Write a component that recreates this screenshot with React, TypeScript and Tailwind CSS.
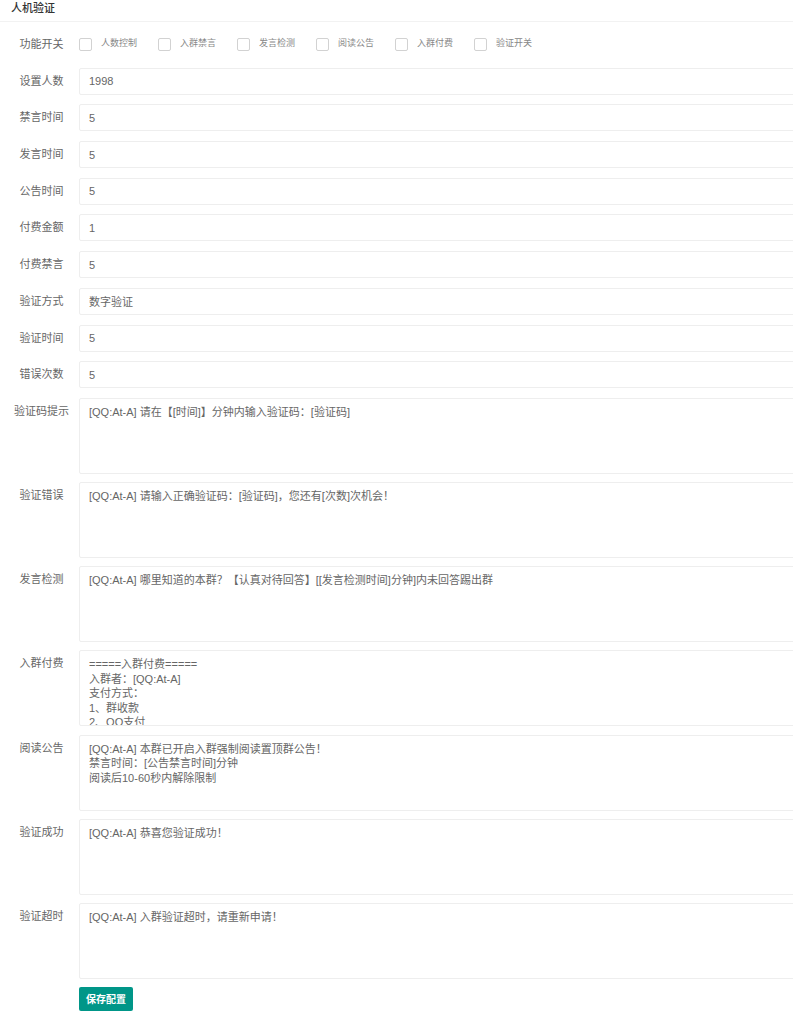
import { useState } from 'react'

const switches = ['人数控制', '入群禁言', '发言检测', '阅读公告', '入群付费', '验证开关']

const fields: [string, string][] = [
  ['设置人数', '1998'],
  ['禁言时间', '5'],
  ['发言时间', '5'],
  ['公告时间', '5'],
  ['付费金额', '1'],
  ['付费禁言', '5'],
  ['验证方式', '数字验证'],
  ['验证时间', '5'],
  ['错误次数', '5'],
]

const messages: [string, string][] = [
  ['验证码提示', '[QQ:At-A] 请在【[时间]】分钟内输入验证码：[验证码]'],
  ['验证错误', '[QQ:At-A] 请输入正确验证码：[验证码]，您还有[次数]次机会！'],
  ['发言检测', '[QQ:At-A] 哪里知道的本群？【认真对待回答】[[发言检测时间]分钟]内未回答踢出群'],
  ['入群付费', '=====入群付费=====\n入群者：[QQ:At-A]\n支付方式：\n1、群收款\n2、QQ支付\n3、微信支付\n请在[付费禁言]分钟内完成付费'],
  ['阅读公告', '[QQ:At-A] 本群已开启入群强制阅读置顶群公告！\n禁言时间：[公告禁言时间]分钟\n阅读后10-60秒内解除限制'],
  ['验证成功', '[QQ:At-A] 恭喜您验证成功！'],
  ['验证超时', '[QQ:At-A] 入群验证超时，请重新申请！'],
]

function Label({ children }: { children: string }) {
  return (
    <div className="w-[67px] ml-[8px] mr-[4px] shrink-0 h-[27px] leading-[27px] text-center text-[11px] text-[#666]">
      {children}
    </div>
  )
}

export default function App() {
  const [checked, setChecked] = useState<Set<string>>(new Set())

  const toggle = (name: string) => {
    setChecked(prev => {
      const next = new Set(prev)
      next.has(name) ? next.delete(name) : next.add(name)
      return next
    })
  }

  return (
    <div
      className="w-[793px] min-h-[1024px] bg-white overflow-hidden"
      style={{ fontFamily: '"Liberation Sans", "Noto Sans CJK SC", sans-serif' }}
    >
      {/* Card header */}
      <div className="h-[22px] border-b border-[#f2f2f2] px-[11px] text-[11px] leading-[16px] font-medium text-[#333]">
        人机验证
      </div>

      <form className="pt-[8px]" onSubmit={e => e.preventDefault()}>
        {/* Feature switches */}
        <div className="flex items-center h-[28px] mb-[9.7px]">
          <Label>功能开关</Label>
          <div className="flex items-center">
            {switches.map(s => (
              <label key={s} className="flex items-center w-[79px] cursor-pointer select-none" onClick={() => toggle(s)}>
                <span
                  className={
                    'w-[13px] h-[13px] rounded-[2px] border flex items-center justify-center ' +
                    (checked.has(s) ? 'bg-[#5fb878] border-[#5fb878]' : 'bg-white border-[#d2d2d2]')
                  }
                >
                  {checked.has(s) && (
                    <svg viewBox="0 0 12 12" className="w-[9px] h-[9px]">
                      <path d="M2 6.5l2.5 2.5L10 3.5" fill="none" stroke="white" strokeWidth="1.8" />
                    </svg>
                  )}
                </span>
                <span className="ml-[9px] text-[9px] text-[#888]">{s}</span>
              </label>
            ))}
          </div>
        </div>

        {/* Number / select fields */}
        {fields.map(([label, value]) => (
          <div key={label} className="flex mb-[9.7px]">
            <Label>{label}</Label>
            <input
              defaultValue={value}
              className="flex-1 -mr-[4px] h-[27px] border border-[#eee] rounded-[2px] pl-[9px] text-[11px] text-[#666] outline-none"
            />
          </div>
        ))}

        {/* Message templates */}
        {messages.map(([label, value]) => (
          <div key={label} className="flex mb-[8.2px]">
            <Label>{label}</Label>
            <textarea
              defaultValue={value}
              className="flex-1 -mr-[4px] h-[76px] border border-[#eee] rounded-[2px] pl-[9px] pt-[6px] text-[11px] leading-[14.5px] text-[#666] resize-none overflow-hidden outline-none"
            />
          </div>
        ))}

        <div className="flex">
          <div className="w-[79px] shrink-0" />
          <button
            type="submit"
            className="h-[24px] w-[54px] bg-[#009688] rounded-[2px] text-white text-[10px] font-bold"
          >
            保存配置
          </button>
        </div>
      </form>
    </div>
  )
}
